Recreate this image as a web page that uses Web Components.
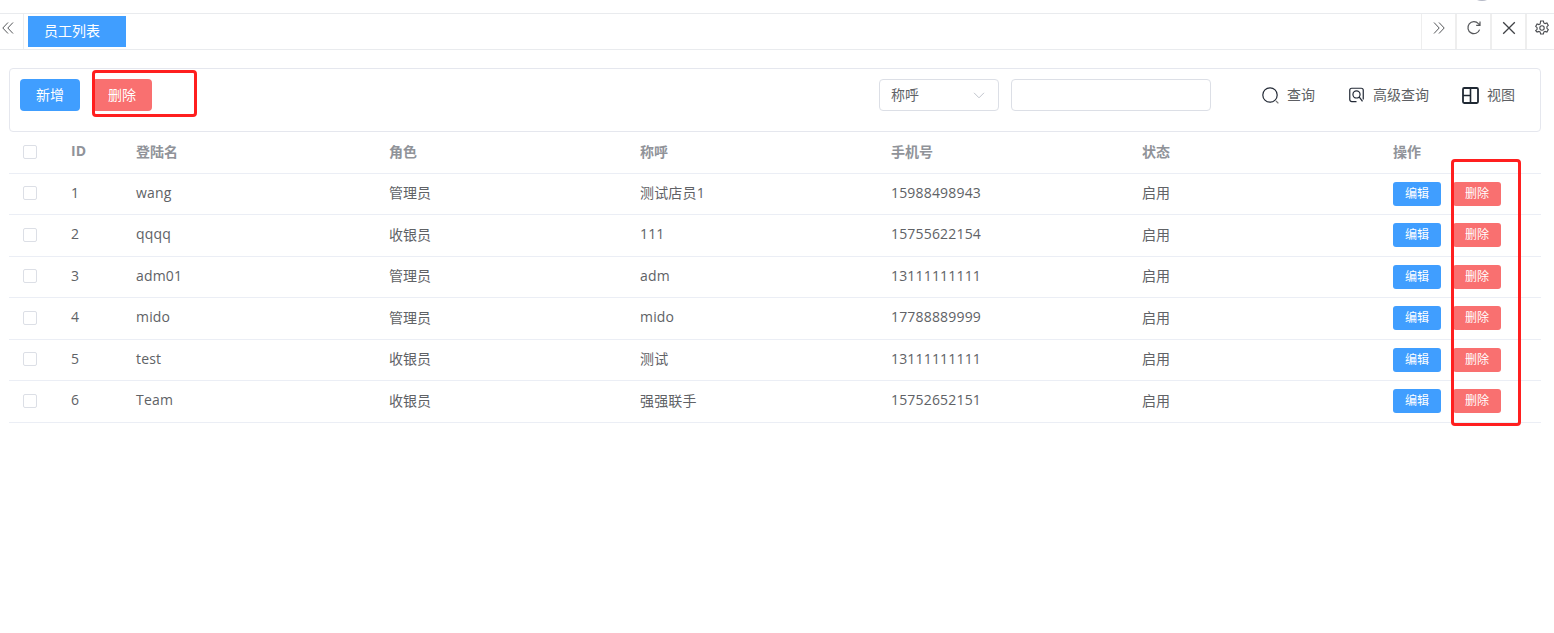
<!DOCTYPE html>
<html lang="zh"><head><meta charset="utf-8"><title>员工列表</title>
<style>
html,body{margin:0;padding:0;background:#fff;height:633px;overflow:hidden}
body{font:14px "Open Sans","Noto Sans CJK SC",sans-serif;color:#606266;position:relative}
</style></head><body>
<staff-page></staff-page>
<script>
const FONT='"Open Sans","Noto Sans CJK SC",sans-serif';
function def(name,html){
  customElements.define(name,class extends HTMLElement{
    connectedCallback(){
      if(this.shadowRoot)return;
      const r=this.attachShadow({mode:'open'});
      r.innerHTML=typeof html==='function'?html(this):html;
    }
  });
}
def('ui-button',h=>{
  const small=h.hasAttribute('small'),red=h.getAttribute('kind')==='danger';
  return `<style>:host{display:inline-flex;align-items:center;justify-content:center;box-sizing:border-box;
  width:${small?48:60}px;height:${small?24:32}px;border-radius:${small?3:4}px;padding-bottom:${small?2:3}px;
  background:${red?'#f97070':'#409eff'};color:#fff;font-size:${small?12:14}px;font-family:${FONT}}</style><slot></slot>`;
});
def('ui-check',`<style>:host{display:block;box-sizing:border-box;width:14px;height:14px;border:1px solid #dcdfe6;border-radius:2px;background:#fff}</style>`);
def('tool-link',`<style>:host{display:inline-flex;align-items:center;gap:8px;font-size:14px;color:#5d5f63}
::slotted(svg){display:block;flex:none}
span{display:block;padding-bottom:3px}</style><slot name="icon"></slot><span><slot></slot></span>`);
def('tab-bar',`<style>
:host{display:flex;box-sizing:border-box;height:37px;margin-top:13px;border-top:1px solid #e9ebee;border-bottom:1px solid #e9ebee;background:#fff}
.l{width:24px;box-sizing:border-box;border-right:1px solid #eeeeee;flex:none;display:flex;padding:7px 0 0 2px}
.tabs{flex:1;padding:2px 0 0 4px}
.tab{width:98px;height:31px;background:#409eff;color:#fff;font-size:14px;display:flex;align-items:center;justify-content:center;padding:0 10px 3px 0;box-sizing:border-box}
.r{width:35px;box-sizing:border-box;border-left:2px solid #eeeeee;flex:none;display:flex;justify-content:center;padding-top:6px}
.r.first{width:34px;border-left-width:1px}
.r.last{width:29px;padding-left:3px}
svg{display:block}
</style>
<div class="l"><svg width="12" height="14" viewBox="0 0 12 14" fill="none" stroke="#55575a" stroke-width="1"><path d="M6 1.5 .8 7 6 12.5M11 1.5 5.8 7 11 12.5"/></svg></div>
<div class="tabs"><div class="tab">员工列表</div></div>
<div class="r first"><svg width="12" height="14" viewBox="0 0 12 14" fill="none" stroke="#55575a" stroke-width="1" style="margin-top:1px"><path d="M1 1.5 6.2 7 1 12.5M6 1.5 11.2 7 6 12.5"/></svg></div>
<div class="r"><svg width="16" height="16" viewBox="0 0 16 16" fill="none" stroke="#55575a" stroke-width="1.2"><path d="M13.6 9.6A6 6 0 1 1 12.4 3.6L14 5.2M14 1.6v3.8h-3.8" /></svg></div>
<div class="r"><svg width="14" height="14" viewBox="0 0 14 14" fill="none" stroke="#3f4145" stroke-width="1.3" style="margin-top:1px"><path d="M1.2 1.2 12.8 12.8M12.8 1.2 1.2 12.8"/></svg></div>
<div class="r last"><svg width="14" height="15" viewBox="0 0 14 15" fill="none" stroke="#4a4c50" stroke-width="1.1"><path d="M5.6 1h2.8l.4 1.9 1.3.7 1.8-.6 1.4 2.4-1.4 1.3v1.6l1.4 1.3-1.4 2.4-1.8-.6-1.3.7-.4 1.9H5.6l-.4-1.9-1.3-.7-1.8.6L.7 10.6l1.4-1.3V7.7L.7 6.4 2.1 4l1.8.6 1.3-.7z"/><circle cx="7" cy="8" r="2.2"/></svg></div>`);
def('tool-bar',`<style>
:host{display:flex;align-items:flex-start;box-sizing:border-box;height:64px;margin:18px 13px 0 9px;padding:10px 25px 0 10px;border:1px solid #e5e7ee;border-radius:4px;background:#fff}
.left{display:flex;gap:12px}
.sel{margin-left:auto;width:120px;height:32px;box-sizing:border-box;border:1px solid #dcdfe6;border-radius:4px;display:flex;align-items:center;justify-content:space-between;padding:0 13px 0 11px;color:#606266;font-size:14px}
.sel span{padding-bottom:3px}
.inp{margin-left:12px;width:200px;height:32px;box-sizing:border-box;border:1px solid #dcdfe6;border-radius:4px;background:#fff}
.tools{margin-left:51px;display:flex;gap:33px;height:32px}
</style>
<div class="left"><ui-button>新增</ui-button><ui-button kind="danger">删除</ui-button></div>
<div class="sel"><span>称呼</span><svg width="12" height="7" viewBox="0 0 12 7" fill="none" stroke="#c0c4cc" stroke-width="1"><path d="M1 .8 6 5.8 11 .8"/></svg></div>
<div class="inp"></div>
<div class="tools">
<tool-link><svg slot="icon" width="17" height="17" viewBox="0 0 17 17" fill="none" stroke="#232a36" stroke-width="1.2"><circle cx="8" cy="8" r="7.2"/><path d="M14 14l2.4 2.4" stroke="#777"/></svg>查询</tool-link>
<tool-link style="gap:9px;margin-left:1px"><svg slot="icon" width="15" height="16" viewBox="0 0 16 16" fill="none" stroke="#232a36" stroke-width="1.3"><path d="M8 15H3A2.2 2.2 0 0 1 .8 12.8V3A2.2 2.2 0 0 1 3 .8h10A2.2 2.2 0 0 1 15.2 3v9.8"/><circle cx="8" cy="7.4" r="3.8"/><path d="M10.8 10l3.6 4.8"/></svg>高级查询</tool-link>
<tool-link><svg slot="icon" width="17" height="17" viewBox="0 0 17 17" fill="none" stroke="#1f2833" stroke-width="1.8"><rect x="1" y="1" width="15" height="15" rx="1.2"/><path d="M8.5 1v15M1 8.5h7.5" stroke-width="1.6"/></svg>视图</tool-link>
</div>`);
const ROWS=[[1,'wang','管理员','测试店员1','15988498943'],[2,'qqqq','收银员','111','15755622154'],[3,'adm01','管理员','adm','13111111111'],[4,'mido','管理员','mido','17788889999'],[5,'test','收银员','测试','13111111111'],[6,'Team','收银员','强强联手','15752652151']];
def('staff-table',()=>{
  const cols='62px 65px 253px 251px 251px 251px 251px 148px';
  const row=r=>`<div class="row"><div class="c"><ui-check></ui-check></div><div class="t n">${r[0]}</div><div class="t n">${r[1]}</div><div class="t">${r[2]}</div><div class="t n">${r[3]}</div><div class="t n">${r[4]}</div><div class="t">启用</div><div class="ops"><ui-button small>编辑</ui-button><ui-button small kind="danger">删除</ui-button></div></div>`;
  return `<style>
:host{display:block;margin:0 13px 0 9px;font-size:14px;color:#606266}
.row{display:grid;grid-template-columns:${cols};align-items:center;height:41.5px;box-sizing:border-box;border-bottom:1px solid #ebeef5}
.c{padding:0 0 1px 14px}
.t{padding-bottom:3px}
.n{letter-spacing:.18px}
.head{font-weight:700;color:#909399}
.ops{display:flex;gap:12px}
</style>
<div class="row head"><div class="c"><ui-check></ui-check></div><div class="t">ID</div><div class="t">登陆名</div><div class="t">角色</div><div class="t">称呼</div><div class="t">手机号</div><div class="t">状态</div><div class="t">操作</div></div>${ROWS.map(row).join('')}`;
});
def('red-box',h=>`<style>:host{position:absolute;box-sizing:border-box;border:3px solid #ff1f1f;border-radius:4px;pointer-events:none;
left:${h.getAttribute('x')}px;top:${h.getAttribute('y')}px;width:${h.getAttribute('w')}px;height:${h.getAttribute('h')}px}</style>`);
def('staff-page',`<style>:host{display:block;position:relative;width:1554px;height:633px;overflow:hidden;background:#fff}
.dot{position:absolute;left:1474px;top:-8px;width:16px;height:9px;border-radius:50%;background:#b4b8c6}</style>
<div class="dot"></div>
<tab-bar></tab-bar><tool-bar></tool-bar><staff-table></staff-table>
<red-box x="92" y="70" w="105" h="47"></red-box>
<red-box x="1451" y="159" w="70" h="267"></red-box>`);
</script>
</body></html>
